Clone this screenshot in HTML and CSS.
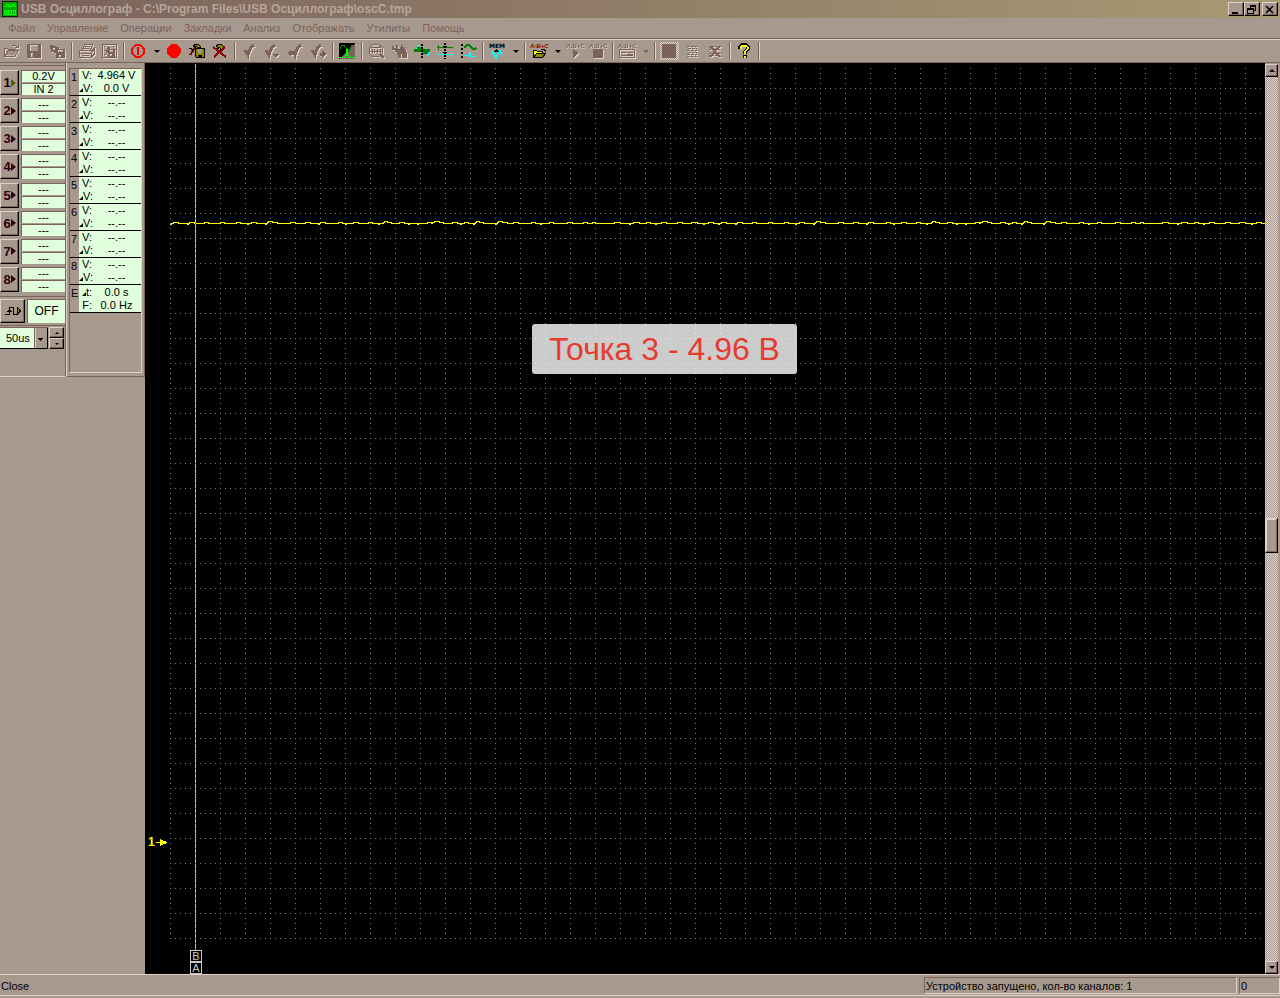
FILE: index.html
```html
<!DOCTYPE html>
<html lang="ru">
<head>
    <meta charset="UTF-8">
    <meta name="viewport" content="width=device-width, initial-scale=1.0">
    <title>USB Осциллограф</title>
    <link rel="stylesheet" href="styles.css">
</head>
<body>
    <header class="title-bar">
        <svg class="app-icon" width="16" height="16" viewBox="0 0 16 16" shape-rendering="crispEdges">
            <path fill="#00a800" d="M0 0h16v16H0z"/>
            <path fill="none" stroke="#002800" d="M.5.5h15v15H.5z"/>
            <path fill="none" stroke="#00ff00" d="M2 5.500h2V3.500h2v2h4V3.500h2v2h2M2.500 13V9.500h2V13M6.500 13V9.500h3V13M11.500 13V9.500h2V13M2 13.500h12"/>
        </svg>
        <h1>USB Осциллограф - C:\Program Files\USB Осциллограф\oscC.tmp</h1>
        <div class="window-buttons">
            <button aria-label="Свернуть"><svg width="12" height="11" viewBox="0 0 12 11"><path d="M2 8h6v2H2z"/></svg></button>
            <button aria-label="Восстановить"><svg width="12" height="11" viewBox="0 0 12 11" shape-rendering="crispEdges"><path fill="none" stroke="#000" d="M4 1.500h6M4.500 1v3M9.500 1v6M7 6.500h3M4 2.500h6M1 4.500h6v5H1.500V4.500M1 5.500h6"/></svg></button>
            <button class="close" aria-label="Закрыть"><svg width="12" height="11" viewBox="0 0 12 11"><path fill="none" stroke="#000" stroke-width="1.600" d="M2 2l7 7M9 2L2 9"/></svg></button>
        </div>
    </header>

    <nav class="menu-bar">
        <button>Файл</button>
        <button>Управление</button>
        <button>Операции</button>
        <button>Закладки</button>
        <button>Анализ</button>
        <button>Отображать</button>
        <button>Утилиты</button>
        <button>Помощь</button>
    </nav>

    <div class="toolbar" role="toolbar">
        <button class="tool off" aria-label="Открыть">
            <svg viewBox="0 0 19 16"><path fill="none" stroke="currentColor" d="M2.500 13V5.500h3l1 1h6v2M2.500 13.500h10l4-6H6.500zM9.500 3.500l1-1h3l2 2M13 4.500h3.500V2"/><path d="M4 12l3-4h8l-3 4z" opacity=".5"/></svg>
        </button>
        <button class="tool off" aria-label="Сохранить">
            <svg viewBox="0 0 19 16"><path fill-rule="evenodd" d="M2 1h14v14H3l-1-1zM5 2v6h8V2zM6 10v4h2v-4z"/></svg>
        </button>
        <button class="tool off" aria-label="Сохранить фрагмент">
            <svg viewBox="0 0 19 16"><path fill-rule="evenodd" d="M2 2h3v1h3v1h3v2h6v9H8v-5H6V9H3V6H2zM5 5v2h2V5zM10 7v2h5V7zM11 12v2h2v-2z"/></svg>
        </button>
        <span class="separator"></span>
        <button class="tool off" aria-label="Печать">
            <svg viewBox="0 0 19 16"><path fill="none" stroke="currentColor" d="M5.500 7l2-5.500h8L13.500 7M8 3.500h5M7 5.500h5M3 7.500h12l2-2v6l-3 3H3.500l-1-1v-5zM3 10.500h11v4M14 9l3-2M5 12.500h7"/></svg>
        </button>
        <button class="tool off" aria-label="Просмотр">
            <svg viewBox="0 0 19 16"><path fill="none" stroke="currentColor" d="M2.500 1.500h14v13h-14zM4 3.500h2M13 3.500h2M4 7.500h2M4 11.500h2"/><path fill-rule="evenodd" d="M7 4h3v2h5v8H8v-4H6V7h1zM10 7v2h3V7zM10 11v2h2v-2z"/></svg>
        </button>
        <span class="separator"></span>
        <button class="tool" aria-label="Пуск">
            <svg viewBox="0 0 19 16"><circle cx="9" cy="8" r="6" fill="none" stroke="#f00" stroke-width="2"/><path fill="#f00" d="M8 4h2v8H8z"/></svg>
        </button>
        <button class="drop" aria-label="Режим пуска"></button>
        <button class="tool" aria-label="Запись">
            <svg viewBox="0 0 19 16"><circle cx="9" cy="8" r="7" fill="#f00"/></svg>
        </button>
        <button class="tool" aria-label="Сохранить настройки">
            <svg viewBox="0 0 19 16"><path fill="#8b8b00" stroke="#000" d="M7.500 5.500h9v9h-8l-1-1z"/><path fill="#a8998f" d="M10 6h4v4h-4z"/><path d="M10 12h4v2h-4z"/><path fill="#8b8b00" stroke="#000" d="M5.500 2.500l2-1h3l2 2v1h-3l-1-1-2 1z"/><path fill="none" stroke="#800000" stroke-width="2" d="M7 5l-5 7"/><path fill="none" stroke="#000" d="M1 5.500h2l2 2"/></svg>
        </button>
        <button class="tool" aria-label="Сбросить настройки">
            <svg viewBox="0 0 19 16"><path fill="#8b8b00" stroke="#000" d="M5.500 2.500l2-1h3l2 2v2l-2 1-2-2-2 1z"/><path fill="none" stroke="#000" d="M10 6l-7 8"/><path fill="none" stroke="#900000" stroke-width="2" d="M2 4l13 10M14 4L3 14"/></svg>
        </button>
        <span class="separator"></span>
        <button class="tool off check" aria-label="Закладка">
            <svg viewBox="0 0 19 16"><path d="M5 7l3 5c1-5 3-8 6-10"/></svg>
        </button>
        <button class="tool off check" aria-label="Список закладок">
            <svg viewBox="0 0 19 16"><path d="M3 7l3 5c1-5 3-8 6-10"/><path class="tip" d="M9 11h7l-3 4z"/></svg>
        </button>
        <button class="tool off check" aria-label="Предыдущая закладка">
            <svg viewBox="0 0 19 16"><path d="M7 8l2 4c1-5 3-8 6-10"/><path class="tip" d="M1 10l4-4v2h3v4H5v2z"/></svg>
        </button>
        <button class="tool off check" aria-label="Следующая закладка">
            <svg viewBox="0 0 19 16"><path d="M3 7l3 5c1-5 3-8 6-10"/><path class="tip" d="M17 11l-4-4v3h-2v3h2v2z"/></svg>
        </button>
        <span class="separator"></span>
        <button class="tool" aria-label="Осциллограф">
            <svg viewBox="0 0 19 16"><path d="M1 0h16v16H1z"/><path fill="#7b625b" d="M17 0v16H1z"/><path fill="none" stroke="#009000" d="M2 5.500l2-3h2l5 6 3-6h2"/><path fill="none" stroke="#0f0" d="M1 14.500h6.500V12h1V6.500h1V12h1v2.500H17"/></svg>
        </button>
        <span class="separator"></span>
        <button class="tool off" aria-label="Спектр">
            <svg viewBox="0 0 19 16"><path fill="none" stroke="currentColor" d="M5.500 1.500h6l4 3v6l-3 3h-7l-3-3v-6zM4 4.500h10M2 8.500h13M5 6v4M7.500 6v4M10.500 6v4M13.500 6v4"/><path fill="none" stroke="currentColor" stroke-width="2" d="M13 11l4 4"/></svg>
        </button>
        <button class="tool off" aria-label="Поиск">
            <svg viewBox="0 0 19 16"><path d="M2 3h2v2h2V2h2v4h2V4h1V2h2v2h2v2h1v3h1v6h-5v-4h-1v4H8v-4H7V9H5V7H2z"/></svg>
        </button>
        <button class="tool" aria-label="Сигнал">
            <svg viewBox="0 0 19 16"><path fill="#0ff" d="M3 5h1V2h2v2h2v2H3zM11 8h6v2h-1v3h-2v-2h-3z"/><path fill="#008000" d="M1 6h3V4h4v2h9v3h-2v2h-5V9H1z"/><path fill="none" stroke="#000" stroke-width="2" stroke-dasharray="2 1" d="M9 1v14"/></svg>
        </button>
        <button class="tool" aria-label="Курсоры">
            <svg viewBox="0 0 19 16"><path fill="none" stroke="#008000" d="M1 4.500h16M2.500 2v5"/><path fill="none" stroke="#0ff" d="M1 11.500h16M15.500 9v5"/><path fill="none" stroke="#000" stroke-width="2" stroke-dasharray="2 1" d="M9 0v16"/><path d="M7 3h4v1H7zM7 9h4v1H7z"/></svg>
        </button>
        <button class="tool" aria-label="Разделить каналы">
            <svg viewBox="0 0 19 16"><path fill="none" stroke="#000" stroke-width="2" stroke-dasharray="2 2" d="M3 1v14"/><path fill="none" stroke="#008000" stroke-width="1.500" d="M5 5l3-3h2l4 4h2l1-1"/><path fill="#0ff" d="M5 12h5V9h2v4h5v1h-6v-1H5z"/></svg>
        </button>
        <span class="separator"></span>
        <button class="tool" aria-label="Память">
            <svg viewBox="0 0 19 16"><text x="1" y="5" class="icon-text" fill="#000">MEM</text><path fill="none" stroke="#0ff" stroke-width="1.500" d="M3 11l2-2 3 6 3-7h1l2 4"/><path d="M8 6l3 3H5z"/></svg>
        </button>
        <button class="drop" aria-label="Список памяти"></button>
        <span class="separator"></span>
        <button class="tool" aria-label="Открыть сценарий">
            <svg viewBox="0 0 19 16"><text x="0" y="5" class="icon-text slanted" fill="#900000">A:B+C</text><path fill="#ff0" stroke="#000" d="M3.500 14V7.500h3l1 1h5V10"/><path fill="#8b8b00" stroke="#000" d="M3.500 14.500l3-4h9l-3 4z"/><path fill="none" stroke="#000" d="M11 6.500h3l2 2"/></svg>
        </button>
        <button class="drop" aria-label="Список сценариев"></button>
        <button class="tool off" aria-label="Запустить сценарий">
            <svg viewBox="0 0 19 16"><text x="0" y="5" class="icon-text slanted" fill="currentColor">A:B+C</text><path d="M7 6l6 4-6 5z"/></svg>
        </button>
        <button class="tool off" aria-label="Остановить сценарий">
            <svg viewBox="0 0 19 16"><text x="0" y="5" class="icon-text slanted" fill="currentColor">A:B+C</text><path d="M4 6h10v9H4z"/></svg>
        </button>
        <span class="separator"></span>
        <button class="tool off" aria-label="Панель сценария">
            <svg viewBox="0 0 19 16"><text x="0" y="5" class="icon-text slanted" fill="currentColor">A:B+C</text><path fill="none" stroke="currentColor" d="M1.500 6.500h15v8h-15zM3 9.500h5M10 9.500h5M3 12.500h12M10 11h5"/></svg>
        </button>
        <button class="drop off" aria-label="Список панелей"></button>
        <span class="separator"></span>
        <button class="tool off pressed" aria-label="Сетка">
            <svg viewBox="0 0 19 16"><path d="M2 1h14v14H2z"/></svg>
        </button>
        <button class="tool off" aria-label="Точки">
            <svg viewBox="0 0 19 16"><path fill="none" stroke="currentColor" stroke-dasharray="3 1" d="M4 3.500h10M5 5.500h9M4 7.500h10M5 9.500h9M4 11.500h10M4 13.500h10"/></svg>
        </button>
        <button class="tool off" aria-label="Очистить">
            <svg viewBox="0 0 19 16"><path fill="none" stroke="currentColor" stroke-dasharray="2 1" d="M3 3.500h12M3 6.500h12M3 10.500h12M3 12.500h12"/><path fill="none" stroke="currentColor" stroke-width="2" d="M4 3l10 11M14 3L4 14"/></svg>
        </button>
        <span class="separator"></span>
        <button class="tool" aria-label="Справка">
            <svg viewBox="0 0 19 16"><path fill="none" stroke="#000" stroke-width="4" d="M5 6V4l2-2h4l2 2v2l-3 3v2M10 12v3"/><path fill="none" stroke="#ff0" stroke-width="2" d="M5.500 5.500V4L7 2.500h4L12.500 4v2L10 8.500V11M10 12.500v2"/></svg>
        </button>
        <span class="separator"></span>
    </div>

    <main class="workspace">
        <aside class="channels">
            <div class="channel-list">
                <div class="channel active">
                    <button>1</button>
                    <input aria-label="Масштаб 1" value="0.2V" readonly>
                    <input aria-label="Вход 1" value="IN 2" readonly>
                </div>
                <div class="channel">
                    <button>2</button>
                    <input aria-label="Масштаб 2" value="---" readonly>
                    <input aria-label="Вход 2" value="---" readonly>
                </div>
                <div class="channel">
                    <button>3</button>
                    <input aria-label="Масштаб 3" value="---" readonly>
                    <input aria-label="Вход 3" value="---" readonly>
                </div>
                <div class="channel">
                    <button>4</button>
                    <input aria-label="Масштаб 4" value="---" readonly>
                    <input aria-label="Вход 4" value="---" readonly>
                </div>
                <div class="channel">
                    <button>5</button>
                    <input aria-label="Масштаб 5" value="---" readonly>
                    <input aria-label="Вход 5" value="---" readonly>
                </div>
                <div class="channel">
                    <button>6</button>
                    <input aria-label="Масштаб 6" value="---" readonly>
                    <input aria-label="Вход 6" value="---" readonly>
                </div>
                <div class="channel">
                    <button>7</button>
                    <input aria-label="Масштаб 7" value="---" readonly>
                    <input aria-label="Вход 7" value="---" readonly>
                </div>
                <div class="channel">
                    <button>8</button>
                    <input aria-label="Масштаб 8" value="---" readonly>
                    <input aria-label="Вход 8" value="---" readonly>
                </div>
            </div>
            <div class="trigger">
                <button aria-label="Синхронизация">
                    <svg width="18" height="14" viewBox="0 0 18 14" shape-rendering="crispEdges"><path fill="none" stroke="#000" d="M1 10.500h4.500v-7h4v7h3M3 7.500h5M4 6.500h3"/><path fill="#8b8b00" stroke="#000" d="M13.500 3.500l3 3.500-3 3z"/></svg>
                </button>
                <input aria-label="Режим синхронизации" value="OFF" readonly>
            </div>
            <div class="timebase">
                <select aria-label="Развертка"><option>50us</option></select>
                <div class="spinner">
                    <button class="up" aria-label="Больше"></button>
                    <button class="down" aria-label="Меньше"></button>
                </div>
            </div>
        </aside>

        <section class="measures">
            <div class="measures-frame">
                <table>
                    <tbody>
                        <tr><th rowspan="2">1</th><td>V:</td><td>4.964 V</td></tr>
                        <tr><td class="delta">V:</td><td>0.0 V</td></tr>
                    </tbody>
                    <tbody>
                        <tr><th rowspan="2">2</th><td>V:</td><td>--.--</td></tr>
                        <tr><td class="delta">V:</td><td>--.--</td></tr>
                    </tbody>
                    <tbody>
                        <tr><th rowspan="2">3</th><td>V:</td><td>--.--</td></tr>
                        <tr><td class="delta">V:</td><td>--.--</td></tr>
                    </tbody>
                    <tbody>
                        <tr><th rowspan="2">4</th><td>V:</td><td>--.--</td></tr>
                        <tr><td class="delta">V:</td><td>--.--</td></tr>
                    </tbody>
                    <tbody>
                        <tr><th rowspan="2">5</th><td>V:</td><td>--.--</td></tr>
                        <tr><td class="delta">V:</td><td>--.--</td></tr>
                    </tbody>
                    <tbody>
                        <tr><th rowspan="2">6</th><td>V:</td><td>--.--</td></tr>
                        <tr><td class="delta">V:</td><td>--.--</td></tr>
                    </tbody>
                    <tbody>
                        <tr><th rowspan="2">7</th><td>V:</td><td>--.--</td></tr>
                        <tr><td class="delta">V:</td><td>--.--</td></tr>
                    </tbody>
                    <tbody>
                        <tr><th rowspan="2">8</th><td>V:</td><td>--.--</td></tr>
                        <tr><td class="delta">V:</td><td>--.--</td></tr>
                    </tbody>
                    <tbody class="time">
                        <tr><th rowspan="2">E</th><td class="delta">t:</td><td>0.0 s</td></tr>
                        <tr><td>F:</td><td>0.0 Hz</td></tr>
                    </tbody>
                </table>
            </div>
        </section>

        <section class="scope">
            <svg class="grid" shape-rendering="crispEdges">
                <defs>
                    <pattern id="dots" width="25" height="25" y="-5" patternUnits="userSpaceOnUse">
                        <path fill="#808080" d="M0 0h1v1H0zM5 0h1v1H5zM10 0h1v1h-1zM15 0h1v1h-1zM20 0h1v1h-1zM0 5h1v1H0zM0 10h1v1H0zM0 15h1v1H0zM0 20h1v1H0z"/>
                    </pattern>
                </defs>
                <rect width="100%" height="100%" fill="url(#dots)"/>
            </svg>

            <svg class="wave" height="5" shape-rendering="crispEdges">
                <defs>
                    <path id="trace" d="M0 3.500h1l1-1h1l1-1h4l1 1h1H17l1 1 1-1 1-1h4l1 1H34l1-1h3l1 1H50l1-1h3l1 1H66l1-1h3l1 1H77l1 1 1-1h2l1-1h4l1 1H95l1 1 1-1 2-2h3l1 1h4l1 1H120l1-1h4l1 1H135l1-1h4l1 1H148l1 1 1-1 1-1h4l1 1H168l1-1h3l1 1H175l1 1 1-1h6l1-1h4l1 1H198l1-1h3l1 1H208l1 1 1-1h3l2-2h2l1 1h3l1 1H229l1-1h4l1 1H238l1 1 1-1h4H247l1 1 1-1h8l1-1h3l1 1 1-1 3-1h3l1 1h3l1 1H282l1-1h4l1 1H290l1 1 1-1h2l1-1h3l1 1H303l1 1 3-3h2l1 1h3l1 1H325l1 1 3-3h3l1 1h4l1 1H343l1-1h4l1 1H361l1-1h3l1 1H370l1 1 1-1h7l1-1h3l1 1H397l1-1h4l1 1H413l1-1h3l1 1H422l1-1h2l1 1H444l1-1h5l1 1H459l1 1 1-1h2l1-1h5l1 1H476l1-1h3l1 1H485l1 1 1-1h4l1-1h4l1 1H507l1-1h4l1 1H521l1-1h5l1 1H533l1 1 1-1h3l1-1h4l1 1h5"/>
                </defs>
                <use href="#trace"/>
                <use href="#trace" x="548"/>
            </svg>

            <div class="cursor-line"></div>
            <span class="cursor-tag tag-b">B</span>
            <span class="cursor-tag tag-a">A</span>
            <span class="zero-mark">1<svg width="11" height="7" viewBox="0 0 11 7" shape-rendering="crispEdges"><path fill="#ff0" d="M0 3h4V0l7 3v1L4 7V4H0z"/></svg></span>
            <div class="note">Точка 3 - 4.96 В</div>
        </section>

        <div class="scrollbar">
            <button class="up" aria-label="Вверх"></button>
            <input type="range" aria-label="Смещение" min="0" max="100" value="52">
            <button class="down" aria-label="Вниз"></button>
        </div>
    </main>

    <footer class="status-bar">
        <span class="hint">Close</span>
        <span class="state">Устройство запущено, кол-во каналов: 1</span>
        <span class="count">0</span>
    </footer>
</body>
</html>
```
FILE: styles.css
```css
:root {
    --face: #a8998f;
    --dark: #7b625b;
    --light: #ded2ca;
    --screen: #e1ffdc;
}
* {
    box-sizing: border-box;
}
body {
    display: flex;
    flex-direction: column;
    height: 100vh;
    margin: 0;
    background: var(--face);
    color: #000;
    font: 11px/13px "Liberation Sans", Arial, sans-serif;
}
button, input, select {
    margin: 0;
    padding: 0;
    border: 0;
    border-radius: 0;
    font: inherit;
    color: inherit;
}
button {
    display: flex;
    align-items: center;
    justify-content: center;
    background: var(--face);
}

/* title and menu */
.title-bar {
    display: flex;
    align-items: center;
    height: 18px;
    padding: 0 2px;
    background: linear-gradient(to right, #7b625b, #a89a74);
}
.title-bar h1 {
    flex: 1;
    margin: 0 0 0 3px;
    font-size: 12px;
    line-height: 16px;
    color: #b5a69c;
}
.window-buttons {
    display: flex;
}
.window-buttons button {
    width: 16px;
    height: 14px;
    border: 1px solid;
    border-color: var(--light) #000 #000 var(--light);
    box-shadow: inset -1px -1px var(--dark);
}
.window-buttons .close {
    margin-left: 2px;
}
.menu-bar {
    display: flex;
    gap: 12px;
    height: 21px;
    padding: 0 8px;
    border-bottom: 1px solid var(--dark);
}
.menu-bar button {
    background: none;
    color: var(--dark);
}

/* toolbar */
.toolbar {
    display: flex;
    height: 24px;
    border-top: 1px solid var(--light);
    border-bottom: 1px solid var(--dark);
}
.tool {
    width: 23px;
}
.tool svg {
    flex: none;
    width: 19px;
    height: 16px;
    shape-rendering: crispEdges;
    fill: currentColor;
}
.tool.off svg {
    color: var(--dark);
    filter: drop-shadow(1px 1px 0 var(--light));
}
.check svg path {
    fill: none;
    stroke: currentColor;
    stroke-width: 3;
}
.check svg .tip {
    fill: currentColor;
    stroke: none;
}
.tool.pressed {
    background: repeating-conic-gradient(var(--light) 0 25%, var(--face) 0 50%) 0 0 / 2px 2px content-box;
    padding: 2px;
}
.tool.pressed svg {
    filter: none;
}
.icon-text {
    font: bold 6px "DejaVu Sans", sans-serif;
}
.icon-text.slanted {
    font: italic bold 6px "Liberation Sans", sans-serif;
}
.drop {
    width: 13px;
}
.drop::before, .up::before, .down::before {
    content: "";
    border: 3px solid transparent;
    border-top-color: #000;
    border-bottom: 0;
}
.drop.off::before {
    border-top-color: var(--dark);
}
.separator {
    width: 2px;
    margin: 2px;
    border-left: 1px solid var(--dark);
    border-right: 1px solid var(--light);
}

/* left panels */
.workspace {
    display: flex;
    flex: 1;
    min-height: 0;
}
.channels {
    width: 66px;
    height: 314px;
    padding-top: 2px;
    border-bottom: 1px solid var(--light);
    border-right: 1px solid var(--dark);
}
.channels input {
    min-width: 0;
    background: var(--screen);
    text-align: center;
    border: 1px solid var(--dark);
    border-width: 1px 0 0 1px;
}
.channels button {
    border: 1px solid;
    border-color: var(--light) #000 #000 var(--light);
    box-shadow: inset -1px -1px var(--dark);
}
.channel-list {
    display: flex;
    flex-direction: column;
    justify-content: space-between;
    height: 232px;
    padding: 4px 0;
    border-top: 1px solid var(--dark);
    border-bottom: 1px solid var(--dark);
}
.channel {
    display: grid;
    grid-template-columns: 19px 1fr;
    grid-template-rows: 12px 12px;
    column-gap: 2px;
    row-gap: 1px;
}
.channel button {
    grid-row: span 2;
    font-weight: bold;
    font-size: 13px;
    color: #30000c;
}
.channel button::after {
    content: "";
    border: 4px solid transparent;
    border-left: 5px solid currentColor;
    border-right: 0;
}
.channel.active button {
    color: #000;
}
.channel.active button::after {
    border-left-color: #5c5c00;
}
.trigger {
    display: flex;
    gap: 2px;
    height: 29px;
    padding: 2px 0;
    border-bottom: 1px solid var(--dark);
}
.trigger button {
    width: 25px;
}
.trigger input {
    flex: 1;
    font-size: 12px;
}
.timebase {
    display: flex;
    gap: 1px;
    padding: 1px 1px 0 0;
}
.timebase select {
    appearance: none;
    flex: 1;
    min-width: 0;
    height: 22px;
    padding-left: 6px;
    font-size: 11px;
    background:
        linear-gradient(#000, #000) right 5px top 10px / 5px 1px no-repeat,
        linear-gradient(#000, #000) right 6px top 11px / 3px 1px no-repeat,
        linear-gradient(#000, #000) right 7px top 12px / 1px 1px no-repeat,
        linear-gradient(to right, var(--dark) 1px, var(--light) 1px 2px, var(--face) 2px 13px, #000 13px) right / 14px 100% no-repeat,
        var(--screen);
    border-top: 1px solid var(--dark);
    border-bottom: 1px solid #000;
}
.spinner {
    display: flex;
    flex-direction: column;
    width: 15px;
}
.spinner button {
    height: 11px;
}
.up::before {
    border-top: 0;
    border-bottom: 3px solid #000;
}
.spinner button::before {
    border-width: 2px;
}
.spinner .up::before {
    border-top: 0;
}
.spinner .down::before {
    border-bottom: 0;
}
.measures {
    width: 79px;
    height: 314px;
    padding: 5px 2px 3px;
    border-left: 1px solid var(--light);
    border-right: 1px solid var(--dark);
    border-bottom: 1px solid var(--dark);
}
.measures-frame {
    height: 100%;
    border: 1px solid;
    border-color: var(--dark) var(--light) var(--light) var(--dark);
}
.measures table {
    width: 100%;
    border-spacing: 0;
    table-layout: fixed;
}
.measures th {
    width: 9px;
    padding: 2px 0 0 1px;
    font-weight: normal;
    text-align: left;
    vertical-align: top;
}
.measures td {
    height: 13px;
    padding: 0;
    background: var(--screen);
    text-align: center;
    white-space: nowrap;
}
.measures th, .measures tr:last-child td {
    border-bottom: 1px solid #000;
}
.measures tr:last-child td {
    height: 14px;
}
.measures th + td, .measures td:first-child {
    width: 13px;
    text-align: right;
}
/* small delta before the letter */
.delta::before {
    content: "";
    display: inline-block;
    border: 4px solid transparent;
    border-width: 0 0 4px 4px;
    border-bottom-color: #000;
}
.measures .time td {
    height: 14px;
}

/* oscilloscope screen */
.scope {
    position: relative;
    flex: 1;
    overflow: hidden;
    background: #000;
    border-top: 1px solid #000;
}
.grid {
    position: absolute;
    left: 25px;
    top: 4px;
    width: calc(100% - 25px);
    height: calc(100% - 39px);
}
.wave {
    position: absolute;
    left: 25px;
    top: 157px;
    width: calc(100% - 25px);
    fill: none;
    stroke: #ff0;
}
.cursor-line {
    position: absolute;
    left: 50px;
    top: 0;
    bottom: 24px;
    width: 1px;
    background: repeating-linear-gradient(#c8c8c8 0 4px, #f00000 4px 5px);
}
.cursor-tag {
    position: absolute;
    left: 45px;
    width: 12px;
    height: 12px;
    border: 1px solid #c8c8c8;
    background: #000;
    color: #c8c8c8;
    line-height: 11px;
    text-align: center;
}
.tag-b {
    bottom: 12px;
}
.tag-a {
    bottom: 0;
}
.zero-mark {
    position: absolute;
    left: 3px;
    bottom: 125px;
    display: flex;
    align-items: center;
    gap: 1px;
    color: #ff0;
    font-weight: bold;
    font-size: 12px;
}
.note {
    position: absolute;
    left: 387px;
    top: 260px;
    padding: 0 17px;
    border-radius: 3px;
    background: rgba(255, 255, 255, .8);
    color: #e63b2e;
    font-size: 32px;
    line-height: 50px;
    white-space: nowrap;
}
.scrollbar {
    display: flex;
    flex-direction: column;
    width: 15px;
    padding: 1px 2px 0 0;
}
.scrollbar button {
    height: 13px;
    border: 1px solid;
    border-color: var(--light) #000 #000 var(--light);
    box-shadow: inset -1px -1px var(--dark);
}
.scrollbar .up::before {
    border-top: 0;
}
.scrollbar .down::before {
    border-bottom: 0;
}
.scrollbar input {
    appearance: none;
    writing-mode: vertical-lr;
    flex: 1;
    width: 13px;
    min-height: 0;
    background: repeating-conic-gradient(var(--light) 0 25%, var(--face) 0 50%) 0 0 / 2px 2px;
}
.scrollbar input::-webkit-slider-thumb {
    appearance: none;
    width: 13px;
    height: 35px;
    background: var(--face);
    border: 1px solid;
    border-color: var(--light) #000 #000 var(--light);
    box-shadow: inset -1px -1px var(--dark), inset 1px 1px var(--light);
}

/* status bar */
.status-bar {
    display: flex;
    gap: 2px;
    height: 24px;
    padding: 2px 0;
    border-top: 1px solid var(--light);
    box-shadow: inset 0 -2px var(--face), inset 0 -3px var(--light);
}
.status-bar span {
    height: 17px;
    padding-left: 1px;
    line-height: 18px;
}
.status-bar .hint {
    flex: 1;
}
.status-bar .state, .status-bar .count {
    border: 1px solid;
    border-color: var(--dark) var(--light) var(--light) var(--dark);
    line-height: 16px;
}
.status-bar .state {
    width: 313px;
}
.status-bar .count {
    width: 41px;
}
```
